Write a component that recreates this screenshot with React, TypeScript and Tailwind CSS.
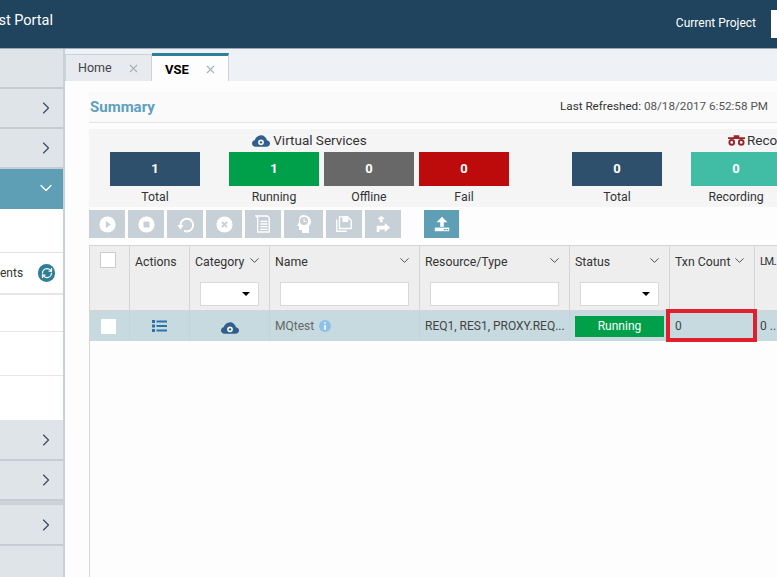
import type { ReactNode } from "react";
import { ChevronDown, ChevronRight, X, RefreshCw } from "lucide-react";

const font = "font-['Roboto','Liberation_Sans',sans-serif]";

function CloudIcon({ className }: { className: string }) {
  return (
    <svg viewBox="0 0 20 13" className={className} fill="currentColor">
      <path d="M4 13C1.6 13 0 11.4 0 9.3 0 7.4 1.3 6 3 5.8 4 2.4 6.700 0 10 0c3.200 0 5.800 2.300 6.700 5.700C18.600 6 20 7.400 20 9.300 20 11.400 18.400 13 16 13Z" />
      <circle cx="10" cy="8" r="3.200" fill="#f5f5f5" />
      <circle cx="10" cy="8" r="1.300" />
    </svg>
  );
}

function SideRow({ open, tall }: { open?: boolean; tall?: string }) {
  return (
    <div
      className={`flex items-center justify-end pr-[7px] border-b-2 ${tall} ${
        open ? "bg-[#5f9fb5] border-[#5f9fb5] text-white" : "bg-[#dfe4e8] border-[#c5ccd2] text-[#33475a]"
      }`}
    >
      {open ? <ChevronDown size={20} strokeWidth={1.500} /> : <ChevronRight size={20} strokeWidth={1.300} />}
    </div>
  );
}

function StatBlock({ value, label, color, className = "" }: { value: number; label: string; color: string; className?: string }) {
  return (
    <div className={`flex flex-col items-center w-[90px] shrink-0 ${className}`}>
      <div className={`flex h-[34px] w-[90px] items-center justify-center text-[13px] font-bold text-white ${color}`}>{value}</div>
      <div className="mt-px text-[12.3px] leading-[20px] text-[#333]">{label}</div>
    </div>
  );
}

function ToolButton({ children, className = "w-9" }: { children: ReactNode; className?: string }) {
  return <div className={`flex h-7 shrink-0 items-center justify-center bg-[#c6d0d6] ${className}`}>{children}</div>;
}

function Circle({ children }: { children: ReactNode }) {
  return (
    <svg viewBox="0 0 20 20" className="h-[17px] w-[17px]">
      <circle cx="10" cy="10" r="9.500" fill="#fff" />
      {children}
    </svg>
  );
}

function HeaderCell({ label, w, filter, noChevron }: { label: string; w: string; filter?: "select" | "text"; noChevron?: boolean }) {
  return (
    <div className={`${w} shrink-0 border-r border-[#d5d5d5] pl-[5px] pr-2 pt-[7px]`}>
      <div className="flex h-[18px] items-center justify-between whitespace-nowrap text-[12.3px] text-[#333]">
        <span>{label}</span>
        {!noChevron && <ChevronDown size={15} strokeWidth={1.500} className="-mr-px mb-1 shrink-0 text-[#444]" />}
      </div>
      {filter && (
        <div className="ml-[5px] mr-[2px] mt-[11px] flex h-[24px] items-center justify-end border border-[#d9d9d9] bg-white pr-2">
          {filter === "select" && <div className="h-0 w-0 border-x-[4px] border-t-[4px] border-x-transparent border-t-black" />}
        </div>
      )}
    </div>
  );
}

function RowCell({ w, children, className = "" }: { w: string; children?: ReactNode; className?: string }) {
  return <div className={`${w} flex h-full shrink-0 items-center border-r border-[#c4d4da] text-xs text-[#444] ${className}`}>{children}</div>;
}

export default function App() {
  return (
    <div className={`${font} h-[577px] w-[777px] overflow-hidden bg-[#fdfdfd]`}>
      <header className="flex h-[49px] items-center justify-between border-b border-[#9aa9b5] bg-[#20445e] text-white">
        <div className="flex w-[54px] justify-end whitespace-nowrap pb-[7px] pr-px text-[14.5px]">st Portal</div>
        <div className="flex items-center gap-[15px]">
          <span className="pb-[2px] text-xs">Current Project</span>
          <div className="h-7 w-[6px] bg-white" />
        </div>
      </header>

      <div className="flex h-[528px]">
        <aside className="flex w-[65px] shrink-0 flex-col border-r-2 border-[#c9d0d6] bg-white">
          <div className="h-[40px] border-b-2 border-[#c5ccd2] bg-[#dfe4e8]" />
          <SideRow tall="h-[40px]" />
          <SideRow tall="h-[40px]" />
          <SideRow open tall="h-[40px]" />
          <div className="h-[44px] border-b border-[#e2e2e2]" />
          <div className="flex h-[42px] items-center justify-end gap-[15px] border-b-2 border-[#e6e6e6] pr-2 text-xs text-[#333]">
            <span>ents</span>
            <span className="flex h-[18px] w-[18px] items-center justify-center rounded-full bg-[#2f7f98] text-white">
              <RefreshCw size={12} strokeWidth={2.500} />
            </span>
          </div>
          <div className="h-[37px] border-b border-[#e6e6e6]" />
          <div className="h-[44px] border-b border-[#e6e6e6]" />
          <div className="h-[44px]" />
          <SideRow tall="h-[41px]" />
          <SideRow tall="h-[40px]" />
          <div className="h-[4px] bg-[#ccd2d7]" />
          <SideRow tall="h-[41px]" />
          <div className="flex-1 bg-[#dfe4e8]" />
        </aside>

        <main className="flex min-w-0 flex-1 flex-col">
          <div className="flex h-[32px] shrink-0 items-end bg-[#eef1f6]">
            <div className="flex h-[27px] w-[87px] items-center justify-between border border-b-0 border-[#ccd2d8] bg-[#e7eaee] pl-3 pr-[11px] text-[12.5px] text-[#444]">
              Home
              <X size={13} className="text-[#a9b0b5]" />
            </div>
            <div className="flex h-[28px] w-[77px] items-center justify-between border-r border-[#ccd2d8] border-t-[3px] border-t-[#2f7f98] bg-[#fdfdfd] pl-[13px] pr-[11px] pt-[2px] text-[13px] font-bold text-black">
              VSE
              <X size={13} className="text-[#a9b0b5]" />
            </div>
          </div>

          <div className="flex min-h-0 flex-1 flex-col pl-6 pt-[11px]">
            <div className="flex h-[31px] shrink-0 items-center justify-between whitespace-nowrap border-b border-[#e2e4e6] bg-[#fafafa] pl-px">
              <span className="text-[15px] font-bold text-[#5f9fc0]">Summary</span>
              <span className="w-[217px] shrink-0 text-[11.700px] text-[#555]">
                <span className="text-[#333]">Last Refreshed:</span> 08/18/2017 6:52:58 PM
              </span>
            </div>

            <div className="mt-[6px] flex h-[78px] shrink-0 gap-[63px] overflow-hidden bg-[#f5f5f5] pl-[21px]">
              <div className="w-[399px] shrink-0">
                <div className="flex h-[23px] items-center justify-center gap-[3px] text-[13.500px] text-[#333]">
                  <CloudIcon className="h-3 w-[18px] text-[#2f5f8a]" />
                  Virtual Services
                </div>
                <div className="flex">
                  <StatBlock value={1} label="Total" color="bg-[#2e506d]" className="mr-[29px]" />
                  <StatBlock value={1} label="Running" color="bg-[#00a04a]" className="mr-[5px]" />
                  <StatBlock value={0} label="Offline" color="bg-[#686868]" className="mr-[5px]" />
                  <StatBlock value={0} label="Fail" color="bg-[#bd0b0b]" />
                </div>
              </div>
              <div className="w-[250px] shrink-0">
                <div className="flex h-[23px] items-center gap-[2px] pl-[156px] text-[13.500px] text-[#333]">
                  <svg viewBox="0 0 18 11" className="h-[11px] w-[17px] shrink-0 text-[#96262a]" fill="none" stroke="currentColor" strokeWidth="2">
                    <circle cx="4" cy="7.500" r="2.500" />
                    <circle cx="14" cy="7.500" r="2.500" />
                    <path d="M0 3h18M6 1h6" />
                  </svg>
                  Reco
                </div>
                <div className="flex gap-[29px]">
                  <StatBlock value={0} label="Total" color="bg-[#2e506d]" />
                  <StatBlock value={0} label="Recording" color="bg-[#41bda6]" />
                </div>
              </div>
            </div>

            <div className="mt-[3px] flex shrink-0 gap-[3px]">
              <ToolButton>
                <Circle><path d="M8 6l6 4-6 4z" fill="#c6d0d6" /></Circle>
              </ToolButton>
              <ToolButton>
                <Circle><rect x="6.500" y="6.500" width="7" height="7" fill="#c6d0d6" /></Circle>
              </ToolButton>
              <ToolButton>
                <svg viewBox="0 0 20 20" className="h-[18px] w-[18px]" fill="none" stroke="#fff" strokeWidth="2.200">
                  <path d="M9 17.500A7 7 0 1 0 5 11" />
                  <path d="M1.500 11h7l-3.500 5z" fill="#fff" stroke="none" />
                </svg>
              </ToolButton>
              <ToolButton>
                <Circle><path d="M7 7l6 6M13 7l-6 6" stroke="#c6d0d6" strokeWidth="2.200" /></Circle>
              </ToolButton>
              <ToolButton>
                <svg viewBox="0 0 18 20" className="h-[18px] w-4" fill="none" stroke="#fff" strokeWidth="1.500">
                  <path d="M1 1h13l2 2v16H3V3z" />
                  <path d="M6 7h8M6 10h8M6 13h8M6 16h8" />
                </svg>
              </ToolButton>
              <ToolButton className="w-[39px]">
                <svg viewBox="0 0 20 20" className="h-5 w-5" fill="#fff">
                  <path d="M9 1c5 0 8 3 8 7 0 2-1 3-2 4v7H8v-3H5v-4H3l2-4c0-4 1-7 4-7z" />
                  <circle cx="10" cy="7" r="4" fill="#c6d0d6" />
                  <path d="M10 4.500v3h2.500" stroke="#fff" fill="none" />
                </svg>
              </ToolButton>
              <ToolButton>
                <svg viewBox="0 0 20 20" className="h-[18px] w-[18px]" fill="none" stroke="#fff" strokeWidth="1.500">
                  <path d="M2 5v13h11M5 2h9l4 4v9H5z" />
                  <path d="M9 2h5v5H9z" fill="#fff" />
                </svg>
              </ToolButton>
              <ToolButton>
                <svg viewBox="0 0 20 20" className="h-[18px] w-[18px]" fill="#fff">
                  <path d="M8 1l4 3-3 1 1 3H7L6 5 4 4zM3 12h9V9l6 5-6 5v-3H6v3H3z" />
                </svg>
              </ToolButton>
              <ToolButton className="ml-5 w-[35px] !bg-[#5f9fb5]">
                <svg viewBox="0 0 20 20" className="h-[18px] w-[18px]" fill="#fff">
                  <path d="M10 2l6 6h-4v5H8V8H4z" />
                  <path d="M2 14h16v4H2z" />
                  <path d="M12 15.500h2v1.500h-2zM15 15.500h2v1.500h-2z" fill="#5f9fb5" />
                </svg>
              </ToolButton>
            </div>

            <div className="mt-[7px] flex min-h-0 flex-1 flex-col border-l border-[#d5d5d5]">
              <div className="flex h-[66px] shrink-0 border-y border-[#d5d5d5] bg-[#eeeeee]">
                <div className="w-[40px] shrink-0 border-r border-[#d5d5d5] pl-[10px] pt-[6px]">
                  <div className="h-[16px] w-[16px] border border-[#ccc] bg-white" />
                </div>
                <HeaderCell label="Actions" w="w-[60px]" noChevron />
                <HeaderCell label="Category" w="w-[80px]" filter="select" />
                <HeaderCell label="Name" w="w-[150px]" filter="text" />
                <HeaderCell label="Resource/Type" w="w-[150px]" filter="text" />
                <HeaderCell label="Status" w="w-[100px]" filter="select" />
                <HeaderCell label="Txn Count" w="w-[85px]" />
                <div className="flex-1 whitespace-nowrap pl-[5px] pt-[7px] text-[11px] leading-[18px] tracking-[-1.500px] text-[#333]">LM..</div>
              </div>
              <div className="flex h-[30px] shrink-0 bg-[#c7dae0]">
                <div className="flex h-full w-[40px] shrink-0 items-center border-r border-[#c4d4da] pl-[11px]">
                  <div className="h-[15px] w-[15px] bg-white" />
                </div>
                <RowCell w="w-[60px]" className="justify-center">
                  <svg viewBox="0 0 15 12" className="h-3 w-[15px] fill-[#2a72a8]">
                    <path d="M0 0h3v3H0zM0 4.500h3v3H0zM0 9h3v3H0zM4.500 .5H15v2H4.500zM4.500 5H15v2H4.500zM4.500 9.500H15v2H4.500z" />
                  </svg>
                </RowCell>
                <RowCell w="w-[80px]" className="justify-center">
                  <CloudIcon className="mt-1 h-3 w-[18px] text-[#2f5f8a]" />
                </RowCell>
                <RowCell w="w-[150px]" className="gap-[5px] pl-[5px] text-[#666]">
                  MQtest
                  <svg viewBox="0 0 12 12" className="h-3 w-3">
                    <circle cx="6" cy="6" r="6" fill="#8fc0ea" />
                    <path d="M5.200 2.200h1.600v1.500H5.200zM5.200 5h1.600v4.800H5.200z" fill="#fff" />
                  </svg>
                </RowCell>
                <RowCell w="w-[150px]" className="pl-[5px] whitespace-nowrap">REQ1, RES1, PROXY.REQ...</RowCell>
                <RowCell w="w-[100px]" className="px-[5px]">
                  <div className="flex h-[21px] flex-1 items-center justify-center bg-[#00a04a] text-white">Running</div>
                </RowCell>
                <div className="relative flex h-full w-[85px] shrink-0 items-center pl-[5px] text-xs text-[#444]">
                  0
                  <div className="absolute left-[-4px] top-[-2px] h-[33px] w-[91px] border-[4px] border-[#e0202c]" />
                </div>
                <div className="flex flex-1 items-center whitespace-nowrap pl-[5px] text-xs text-[#444]">0 ..</div>
              </div>
            </div>
          </div>
        </main>
      </div>
    </div>
  );
}
